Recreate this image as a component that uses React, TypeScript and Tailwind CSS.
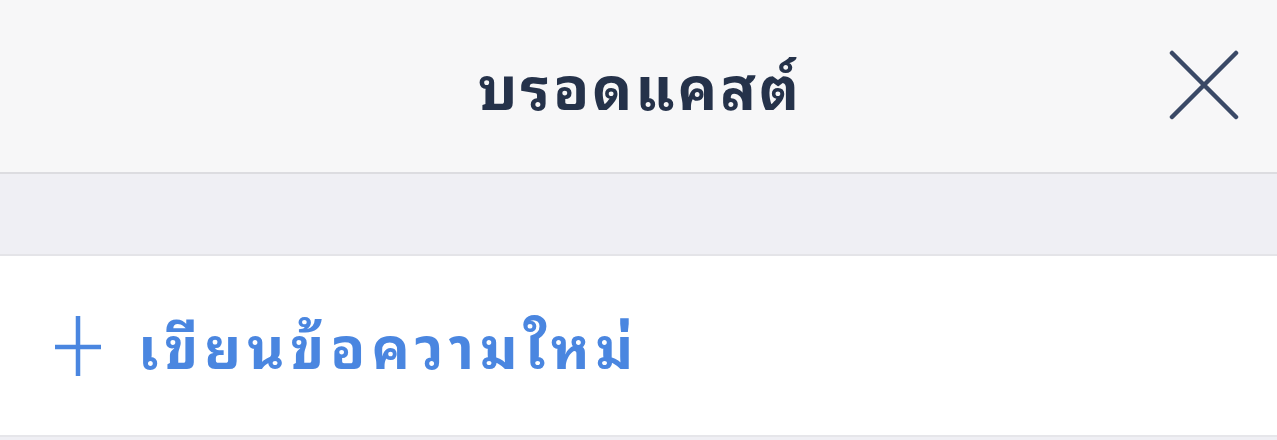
export default function App() {
  return (
    <div
      className="w-[1277px] h-[440px] overflow-hidden bg-[#efeff4]"
      style={{ fontFamily: '"Noto Sans Thai Looped", "Noto Sans Thai", "Noto Sans", sans-serif' }}
    >
      {/* Header */}
      <div className="relative h-[174px] bg-[#f7f7f8] border-b-2 border-[#dcdce0] flex items-center justify-center">
        <h1 className="text-[59px] font-bold text-[#25324a] leading-none tracking-[3px] -mt-[6px] pl-[3px]">บรอดแคสต์</h1>
        <button className="absolute right-[38px] top-[50px] w-[70px] h-[70px] flex items-center justify-center">
          <svg viewBox="0 0 70 70" className="w-[70px] h-[70px]" fill="none" stroke="#3a4966" strokeWidth={4.5} strokeLinecap="round">
            <path d="M3 3L67 67M67 3L3 67" />
          </svg>
        </button>
      </div>

      {/* Spacer band */}
      <div className="h-[82px] bg-[#efeff4] border-b-2 border-[#e4e4e8]" />

      {/* New message row */}
      <div className="h-[181px] bg-white border-b-2 border-[#e6e6ea] flex items-center pl-[55px] gap-[37px]">
        <svg viewBox="0 0 46 60" className="w-[46px] h-[60px]" fill="none" stroke="#4a86e0" strokeWidth={4.5}>
          <path d="M23 0V60M0 31H46" />
        </svg>
        <span className="text-[57px] font-bold text-[#4a86e0] leading-none tracking-[6px] -mt-[4px]">เขียนข้อความใหม่</span>
      </div>
    </div>
  );
}
